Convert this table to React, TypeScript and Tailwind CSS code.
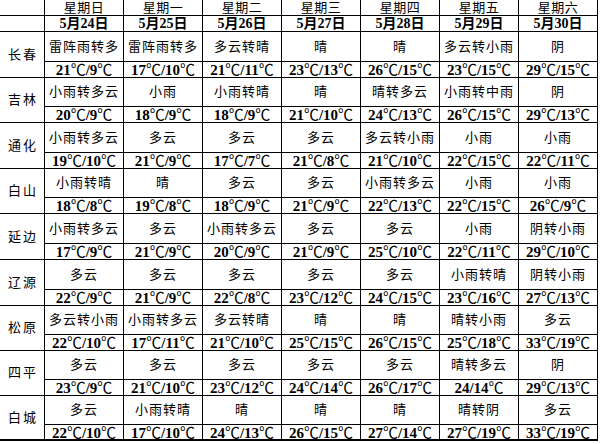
const days = [
  { week: "星期日", date: "5月24日" },
  { week: "星期一", date: "5月25日" },
  { week: "星期二", date: "5月26日" },
  { week: "星期三", date: "5月27日" },
  { week: "星期四", date: "5月28日" },
  { week: "星期五", date: "5月29日" },
  { week: "星期六", date: "5月30日" },
];

interface CityRow {
  name: string;
  tall: boolean;
  weather: string[];
  temps: string[];
}

const cities: CityRow[] = [
  {
    name: "长春",
    tall: true,
    weather: ["雷阵雨转多", "雷阵雨转多", "多云转晴", "晴", "晴", "多云转小雨", "阴"],
    temps: ["21℃/9℃", "17℃/10℃", "21℃/11℃", "23℃/13℃", "26℃/15℃", "23℃/15℃", "29℃/15℃"],
  },
  {
    name: "吉林",
    tall: false,
    weather: ["小雨转多云", "小雨", "小雨转晴", "晴", "晴转多云", "小雨转中雨", "阴"],
    temps: ["20℃/9℃", "18℃/9℃", "18℃/9℃", "21℃/10℃", "24℃/13℃", "26℃/15℃", "29℃/13℃"],
  },
  {
    name: "通化",
    tall: true,
    weather: ["小雨转多云", "多云", "多云", "多云", "多云转小雨", "小雨", "小雨"],
    temps: ["19℃/10℃", "21℃/9℃", "17℃/7℃", "21℃/8℃", "21℃/10℃", "22℃/15℃", "22℃/11℃"],
  },
  {
    name: "白山",
    tall: false,
    weather: ["小雨转晴", "晴", "多云", "多云", "小雨转多云", "小雨", "小雨"],
    temps: ["18℃/8℃", "19℃/8℃", "18℃/9℃", "21℃/9℃", "22℃/13℃", "22℃/15℃", "26℃/9℃"],
  },
  {
    name: "延边",
    tall: true,
    weather: ["小雨转多云", "多云", "小雨转多云", "多云", "多云", "小雨", "阴转小雨"],
    temps: ["17℃/9℃", "21℃/9℃", "20℃/9℃", "21℃/9℃", "25℃/10℃", "22℃/11℃", "29℃/10℃"],
  },
  {
    name: "辽源",
    tall: true,
    weather: ["多云", "多云", "多云", "多云", "多云", "小雨转晴", "阴转小雨"],
    temps: ["22℃/9℃", "21℃/9℃", "22℃/8℃", "23℃/12℃", "24℃/15℃", "23℃/16℃", "27℃/13℃"],
  },
  {
    name: "松原",
    tall: false,
    weather: ["多云转小雨", "小雨转多云", "多云转晴", "晴", "晴", "晴转小雨", "多云"],
    temps: ["22℃/10℃", "17℃/11℃", "21℃/10℃", "25℃/15℃", "26℃/15℃", "25℃/18℃", "33℃/19℃"],
  },
  {
    name: "四平",
    tall: false,
    weather: ["多云", "多云", "多云", "多云", "多云", "晴转多云", "阴"],
    temps: ["23℃/9℃", "21℃/10℃", "23℃/12℃", "24℃/14℃", "26℃/17℃", "24/14℃", "29℃/13℃"],
  },
  {
    name: "白城",
    tall: false,
    weather: ["多云", "小雨转晴", "晴", "晴", "晴", "晴转阴", "多云"],
    temps: ["22℃/10℃", "17℃/10℃", "24℃/13℃", "26℃/15℃", "27℃/14℃", "27℃/19℃", "33℃/19℃"],
  },
];

const font = { fontFamily: '"Liberation Serif", "Noto Sans CJK SC", serif' };

// ℃ is drawn from the CJK font so it gets a wider glyph like the reference
function Temp({ text }: { text: string }) {
  const parts = text.split("℃");
  return (
    <>
      {parts.map((p, i) => (
        <span key={i}>
          {p}
          {i < parts.length - 1 && (
            <span
              className="font-normal text-[15px]"
              style={{ fontFamily: '"Noto Sans CJK SC", sans-serif' }}
            >
              ℃
            </span>
          )}
        </span>
      ))}
    </>
  );
}

export default function App() {
  return (
    <div className="w-[600px] h-[444px] bg-white text-black" style={font}>
      <div className="flex flex-col w-[598px]">
        {/* header */}
        <div className="flex h-[16px]">
          <div className="w-[45px] border-r border-b border-black" />
          {days.map((d) => (
            <div
              key={d.week}
              className="w-[79px] border-r border-b border-black flex items-center justify-center text-[13px] leading-[15px] tracking-[0.5px]"
            >
              {d.week}
            </div>
          ))}
        </div>
        <div className="flex h-[16px]">
          <div className="w-[45px] border-r border-b border-black" />
          {days.map((d) => (
            <div
              key={d.date}
              className="w-[79px] border-r border-b border-black flex items-center justify-center text-[14px] font-bold leading-[15px]"
            >
              {d.date}
            </div>
          ))}
        </div>

        {cities.map((c, i) => {
          const last = i === cities.length - 1;
          return (
            <div key={c.name} className="flex">
              <div
                className={
                  "w-[45px] border-r border-black flex items-center justify-center text-[13px] tracking-[2px] pl-[2px] " +
                  (last ? "border-b-2" : "border-b")
                }
              >
                {c.name}
              </div>
              <div className="flex flex-col">
                <div className={"flex " + (c.tall ? "h-[30px]" : "h-[29px]")}>
                  {c.weather.map((w, j) => (
                    <div
                      key={j}
                      className="w-[79px] border-r border-b border-black flex items-center justify-center whitespace-nowrap text-[13px] leading-[16px] tracking-[1px]"
                    >
                      {w}
                    </div>
                  ))}
                </div>
                <div className="flex h-[16px]">
                  {c.temps.map((t, j) => (
                    <div
                      key={j}
                      className={
                        "w-[79px] border-r border-black flex items-center justify-center whitespace-nowrap text-[15px] font-bold leading-[15px] " +
                        (last ? "border-b-2" : "border-b")
                      }
                    >
                      <Temp text={t} />
                    </div>
                  ))}
                </div>
              </div>
            </div>
          );
        })}
      </div>
    </div>
  );
}
